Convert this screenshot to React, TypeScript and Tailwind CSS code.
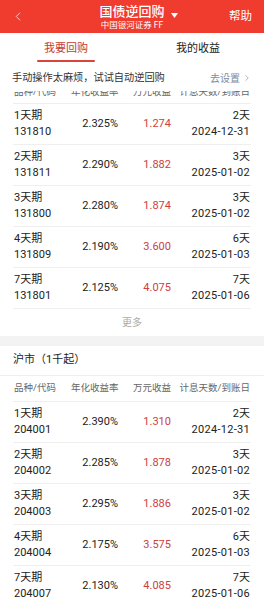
import { ChevronLeft, ChevronRight } from "lucide-react";

type Row = { name: string; code: string; rate: string; gain: string; days: string; date: string };

const sz: Row[] = [
  { name: "1天期", code: "131810", rate: "2.325%", gain: "1.274", days: "2天", date: "2024-12-31" },
  { name: "2天期", code: "131811", rate: "2.290%", gain: "1.882", days: "3天", date: "2025-01-02" },
  { name: "3天期", code: "131800", rate: "2.280%", gain: "1.874", days: "3天", date: "2025-01-02" },
  { name: "4天期", code: "131809", rate: "2.190%", gain: "3.600", days: "6天", date: "2025-01-03" },
  { name: "7天期", code: "131801", rate: "2.125%", gain: "4.075", days: "7天", date: "2025-01-06" },
];

const sh: Row[] = [
  { name: "1天期", code: "204001", rate: "2.390%", gain: "1.310", days: "2天", date: "2024-12-31" },
  { name: "2天期", code: "204002", rate: "2.285%", gain: "1.878", days: "3天", date: "2025-01-02" },
  { name: "3天期", code: "204003", rate: "2.295%", gain: "1.886", days: "3天", date: "2025-01-02" },
  { name: "4天期", code: "204004", rate: "2.175%", gain: "3.575", days: "6天", date: "2025-01-03" },
  { name: "7天期", code: "204007", rate: "2.130%", gain: "4.085", days: "7天", date: "2025-01-06" },
];

function HeadRow() {
  return (
    <div className="flex items-center h-[25px] text-[9.5px] text-[#666] whitespace-nowrap">
      <div className="w-[58px] pl-px">品种/代码</div>
      <div className="w-[47px] text-right">年化收益率</div>
      <div className="w-[53px] text-right">万元收益</div>
      <div className="flex-1 text-right pr-px">计息天数/到账日</div>
    </div>
  );
}

function TableRow({ r }: { r: Row }) {
  return (
    <div className="mx-[13px] flex items-center h-[41px] border-b border-[#efefef] text-[11px] text-[#222] leading-[16px]">
      <div className="w-[58px] pl-px">
        <div>{r.name}</div>
        <div>{r.code}</div>
      </div>
      <div className="w-[47px] text-right">{r.rate}</div>
      <div className="w-[53px] text-right text-[#cc4141]">{r.gain}</div>
      <div className="flex-1 text-right pr-px">
        <div>{r.days}</div>
        <div className="tracking-[0.3px]">{r.date}</div>
      </div>
    </div>
  );
}

export default function App() {
  return (
    <div
      className="w-[264px] h-[600px] overflow-hidden bg-white"
      style={{ fontFamily: 'Roboto, "Noto Sans CJK SC", sans-serif' }}
    >
      <header className="h-[33px] bg-[#f03b2f] text-white flex items-center relative">
        <ChevronLeft className="absolute left-[11px] top-[9px] w-[14px] h-[15px]" strokeWidth={1.3} />
        <div className="flex-1 flex flex-col items-center">
          <span className="text-[13px] leading-[15px] font-medium">国债逆回购</span>
          <span className="text-[8.5px] leading-[10px] mt-[1px]">中国银河证券 FF</span>
        </div>
        <svg className="absolute left-[171px] top-[13px]" width="7" height="5" viewBox="0 0 7 5">
          <path d="M0 0 H7 L3.5 5 Z" fill="white" />
        </svg>
        <span className="absolute right-[12px] top-[9px] text-[11.5px] leading-[14px]">帮助</span>
      </header>

      <div className="grid grid-cols-2 h-[32px]">
        <div className="flex flex-col items-center justify-center relative">
          <span className="text-[11px] text-[#c53a2f]">我要回购</span>
          <div className="absolute bottom-[3px] w-[58px] h-[2px] rounded-full bg-[#d8443a]" />
        </div>
        <div className="flex items-center justify-center">
          <span className="text-[11px] text-[#222]">我的收益</span>
        </div>
      </div>

      <div className="h-[26px] px-[12px] flex items-center justify-between">
        <span className="text-[10.2px] text-[#333]">手动操作太麻烦，试试自动逆回购</span>
        <span className="flex items-center text-[10px] text-[#7d8ba0]">
          去设置
          <ChevronRight className="w-[10px] h-[10px] ml-[2px]" strokeWidth={1.5} />
        </span>
      </div>

      <div className="h-[13px] overflow-hidden border-b border-[#efefef] mx-[13px]">
        <div className="-mt-[11px]">
          <HeadRow />
        </div>
      </div>

      {sz.map((r) => (
        <TableRow key={r.code} r={r} />
      ))}

      <div className="h-[27px] flex items-center justify-center text-[10px] text-[#aaa]">更多</div>

      <div className="h-[10px] bg-[#f3f3f3]" />

      <div className="h-[30px] flex items-center px-[13px] border-b border-[#efefef] text-[11px] text-[#222]">
        沪市（1千起）
      </div>

      <div className="mx-[13px] border-b border-[#efefef]">
        <HeadRow />
      </div>

      {sh.map((r) => (
        <TableRow key={r.code} r={r} />
      ))}
    </div>
  );
}
